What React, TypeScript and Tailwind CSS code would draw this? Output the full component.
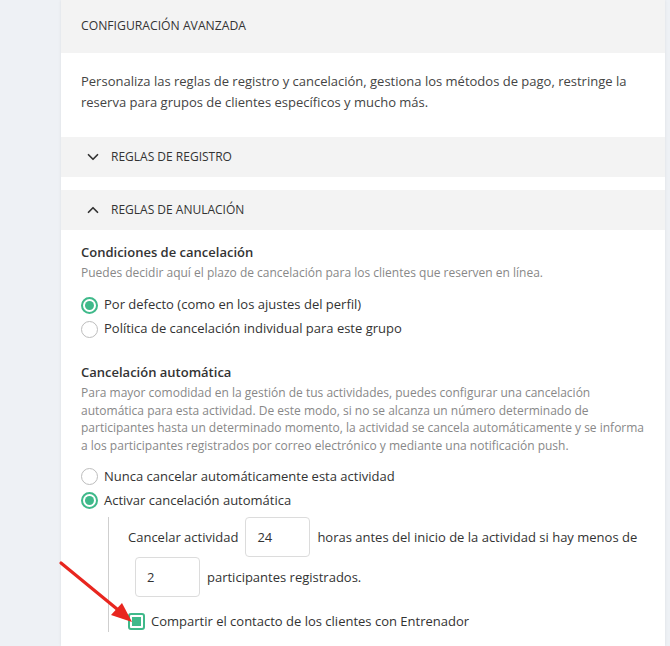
import { ChevronDown, ChevronUp } from 'lucide-react';

function Radio({ checked, label }: { checked?: boolean; label: string }) {
  return (
    <label className="flex items-center gap-[6px] h-[24px] text-[13px] text-[#333]">
      <span
        className={
          checked
            ? 'w-[17px] h-[17px] rounded-full border-2 border-[#3fb98a] flex items-center justify-center'
            : 'w-[17px] h-[17px] rounded-full border-[1.5px] border-[#bdbdbd]'
        }
      >
        {checked && <span className="w-[9px] h-[9px] rounded-full bg-[#3fb98a]" />}
      </span>
      {label}
    </label>
  );
}

function NumberBox({ value }: { value: string }) {
  return (
    <div className="w-[65px] h-[40px] mx-[7px] border border-[#dcdcdc] rounded-[4px] bg-white flex items-center pl-[11px] text-[13px] text-[#333]">
      {value}
    </div>
  );
}

const autoCancelLines = [
  'Para mayor comodidad en la gestión de tus actividades, puedes configurar una cancelación',
  'automática para esta actividad. De este modo, si no se alcanza un número determinado de',
  'participantes hasta un determinado momento, la actividad se cancela automáticamente y se informa',
  'a los participantes registrados por correo electrónico y mediante una notificación push.',
];

export default function App() {
  return (
    <div
      className="min-h-screen bg-[#eef1f5] relative"
      style={{ fontFamily: '"Open Sans", "Noto Sans", sans-serif' }}
    >
      <div className="ml-[61px] w-[604px] min-h-[646px] bg-white shadow-[0_0_3px_rgba(0,0,0,0.08)]">
        {/* Header */}
        <div className="h-[53px] bg-[#f3f3f3] flex items-center px-[20px] text-[12.2px] text-[#333] uppercase">
          Configuración avanzada
        </div>

        {/* Description */}
        <div className="pt-[18px] pb-[24px] px-[20px] text-[13px] leading-[21px] text-[#444]">
          Personaliza las reglas de registro y cancelación, gestiona los métodos de pago, restringe la
          reserva para grupos de clientes específicos y mucho más.
        </div>

        {/* Accordion: registro */}
        <div className="h-[40px] bg-[#f3f3f3] flex items-center pl-[23px] gap-[9px] text-[12px] text-[#333] uppercase">
          <ChevronDown className="w-[18px] h-[18px]" strokeWidth={2.3} />
          Reglas de registro
        </div>
        <div className="h-[13px]" />

        {/* Accordion: anulación */}
        <div className="h-[40px] bg-[#f3f3f3] flex items-center pl-[23px] gap-[9px] text-[12px] text-[#333] uppercase">
          <ChevronUp className="w-[18px] h-[18px]" strokeWidth={2.3} />
          Reglas de anulación
        </div>

        <div className="px-[20px] pt-[12px]">
          <h3 className="text-[13px] leading-[20px] font-semibold text-[#333]">Condiciones de cancelación</h3>
          <p className="text-[12px] leading-[20px] text-[#888] mt-[1px]">
            Puedes decidir aquí el plazo de cancelación para los clientes que reserven en línea.
          </p>
          <div className="mt-[10px] flex flex-col">
            <Radio checked label="Por defecto (como en los ajustes del perfil)" />
            <Radio label="Política de cancelación individual para este grupo" />
          </div>

          <h3 className="mt-[21px] text-[13px] leading-[20px] font-semibold text-[#333]">Cancelación automática</h3>
          <p className="text-[12px] leading-[17.6px] text-[#888] mt-[2px] -mr-[10px]">
            {autoCancelLines.map((line) => (
              <span key={line} className="block whitespace-nowrap">
                {line}
              </span>
            ))}
          </p>
          <div className="mt-[10px] flex flex-col">
            <Radio label="Nunca cancelar automáticamente esta actividad" />
            <Radio checked label="Activar cancelación automática" />
          </div>

          <div className="ml-[27px] mt-[5px] border-l-[1.5px] border-[#cfcfcf] pl-[19px] pb-[2px] text-[13px] text-[#333]">
            <div className="flex items-center h-[40px]">
              <span>Cancelar actividad</span>
              <NumberBox value="24" />
              <span>horas antes del inicio de la actividad si hay menos de</span>
            </div>
            <div className="flex items-center h-[40px]">
              <NumberBox value="2" />
              <span>participantes registrados.</span>
            </div>
            <div className="flex items-center gap-[6px] mt-[16px] h-[17px]">
              <span className="w-[17px] h-[17px] rounded-[3px] border-2 border-[#3fb98a] flex items-center justify-center">
                <span className="w-[9px] h-[9px] bg-[#3fb98a]" />
              </span>
              Compartir el contacto de los clientes con Entrenador
            </div>
          </div>
        </div>
      </div>

      {/* Annotation arrow */}
      <svg className="absolute left-0 top-0 pointer-events-none" width="670" height="646">
        <line x1="61" y1="563" x2="117" y2="609" stroke="#e8261f" strokeWidth="3.2" strokeLinecap="round" />
        <polygon points="132,622 111,615 122,603" fill="#e8261f" />
      </svg>
    </div>
  );
}
